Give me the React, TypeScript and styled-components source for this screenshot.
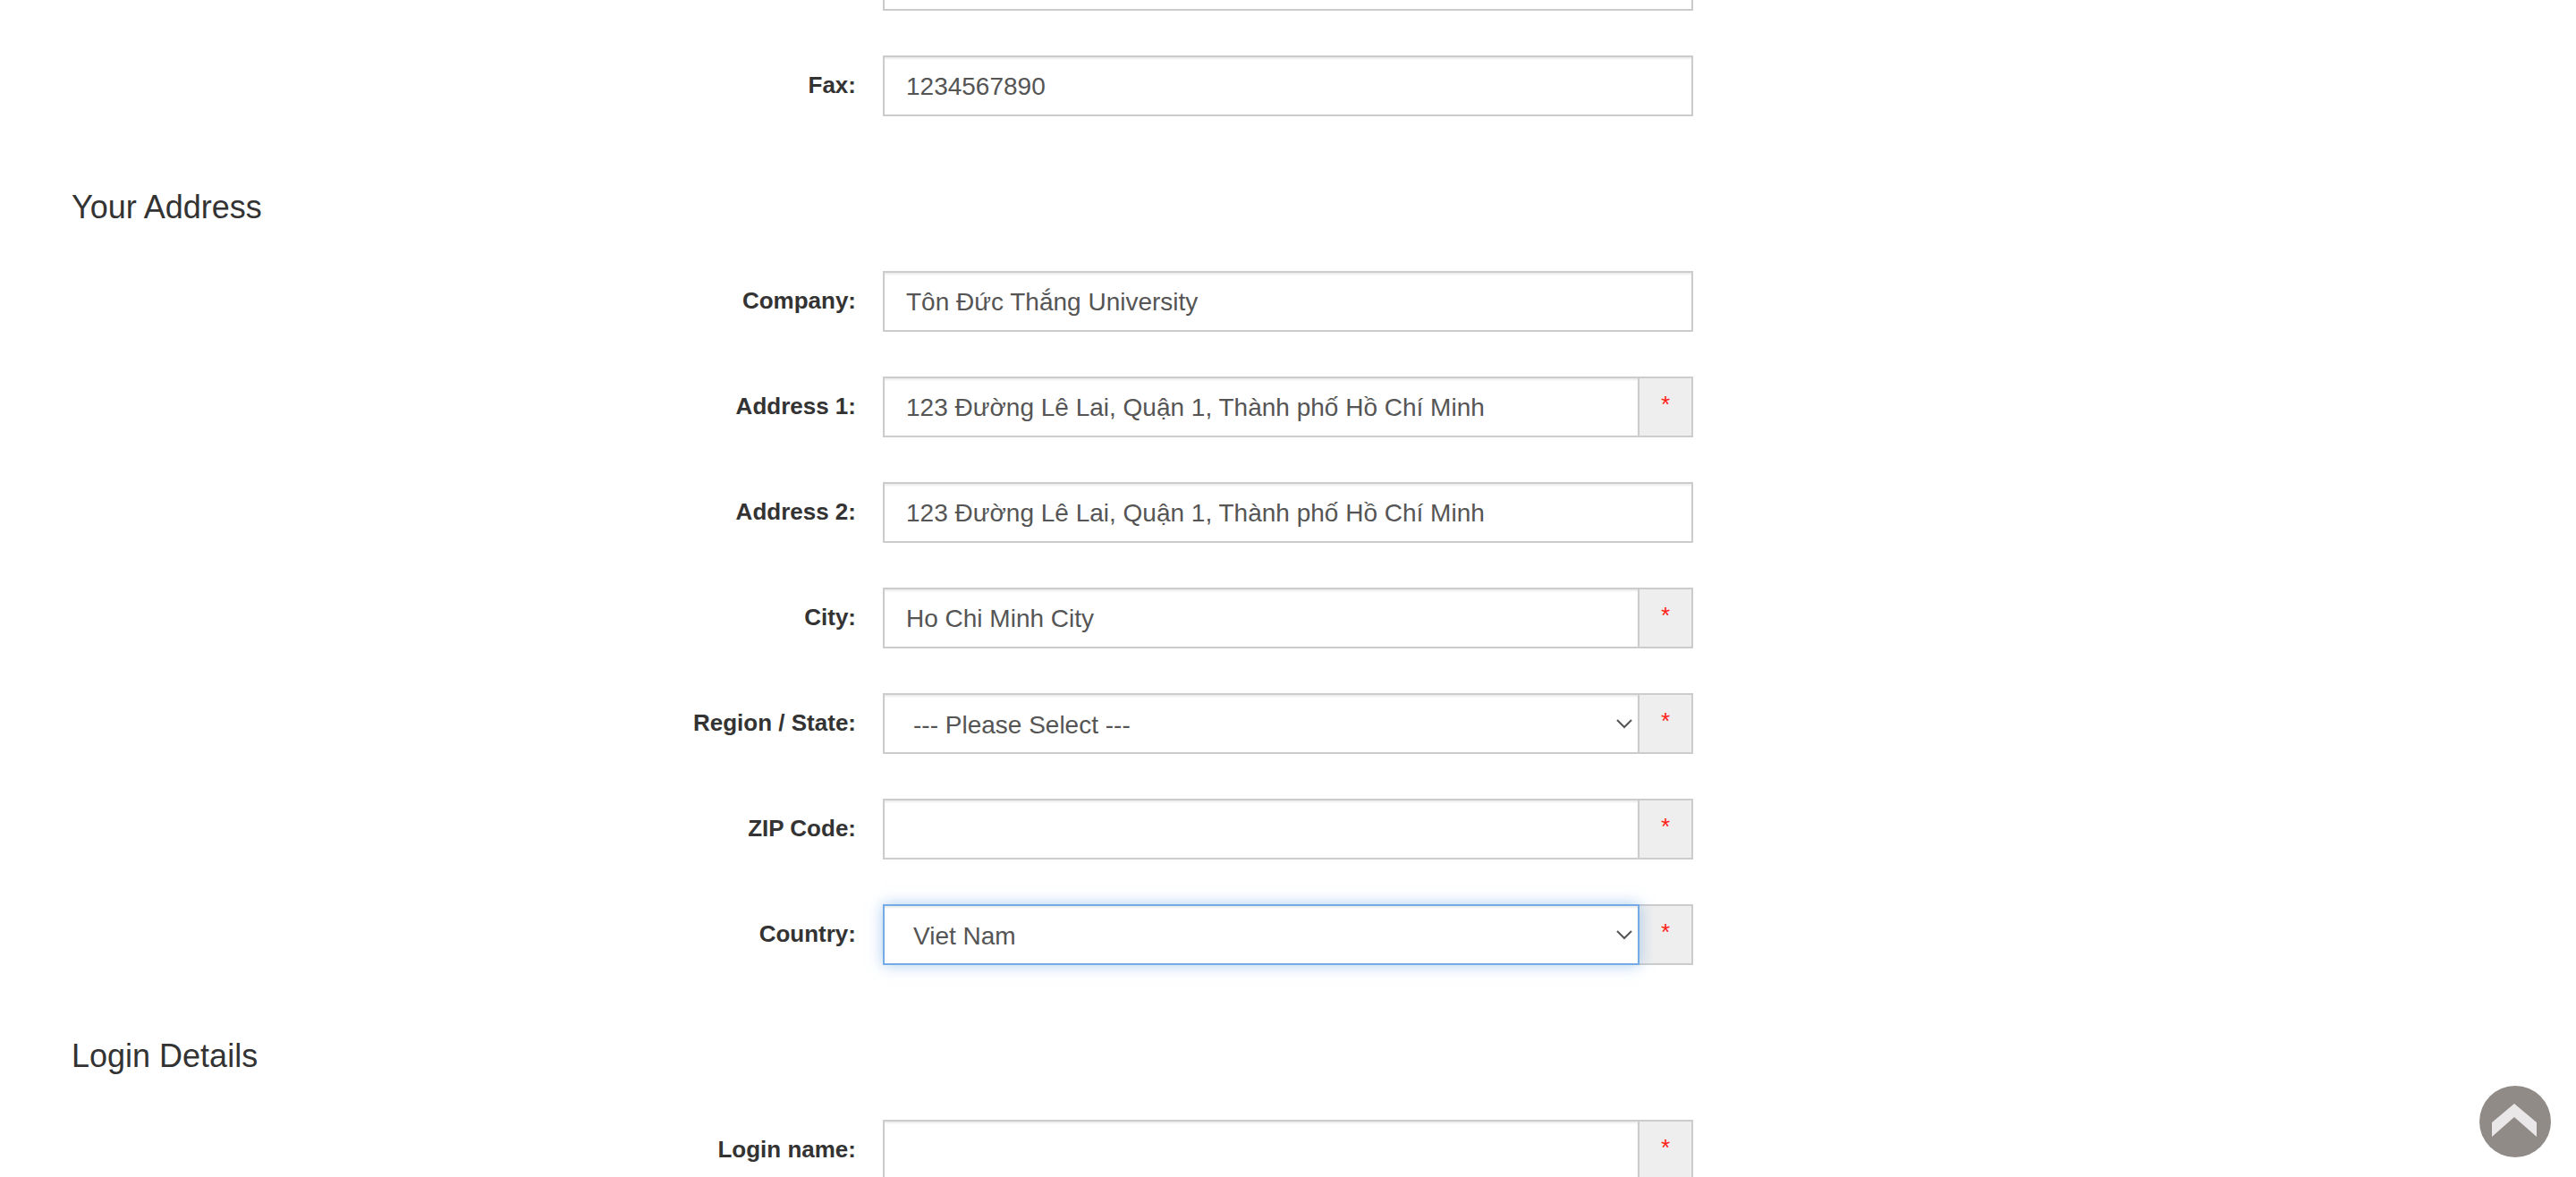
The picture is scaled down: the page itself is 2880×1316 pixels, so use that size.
import React from "react";
import styled, { createGlobalStyle, css } from "styled-components";

const GlobalStyle = createGlobalStyle`
  *, *::before, *::after { box-sizing: border-box; }
  body {
    margin: 0;
    background: #fff;
    color: #333;
    font-family: "Liberation Sans", Arial, Helvetica, sans-serif;
    font-size: 26px;
    line-height: 36px;
  }
`;

const Viewport = styled.main`
  height: 100vh;
  overflow: hidden;
`;

/* The page is scrolled part-way down, so the first field is cut by the window's top edge. */
const Form = styled.form`
  margin-top: -56px;
`;

const Fieldset = styled.fieldset`
  min-width: 0;
  margin: 0;
  padding: 0;
  border: 0;
`;

const Heading = styled.h4`
  margin: 0;
  padding: 32px 80px 51px;
  font-size: 36px;
  line-height: 40px;
  font-weight: 400;
`;

const Row = styled.div`
  display: grid;
  grid-template-columns: repeat(3, minmax(0, 1fr));
  column-gap: 30px;
  padding: 0 51px;
  margin-bottom: 50px;
`;

const Label = styled.label`
  grid-column: 1;
  padding-top: 15px;
  font-weight: 700;
  text-align: right;
`;

const Group = styled.div`
  grid-column: 2;
  display: flex;
`;

const control = css`
  width: 100%;
  min-width: 0;
  height: 68px;
  margin: 0;
  border: 2px solid #ccc;
  border-radius: 0;
  background: #fff;
  color: #555;
  font-family: inherit;
  font-size: 28px;
  line-height: 40px;
  outline: none;
  box-shadow: inset 0 2px 2px rgba(0, 0, 0, 0.075);
`;

const Input = styled.input`
  ${control}
  padding: 13px 24px 11px;
`;

const SelectBox = styled.div`
  position: relative;
  flex: 1;
  display: flex;
`;

const Select = styled.select<{ $active?: boolean }>`
  ${control}
  appearance: none;
  padding: 14px 40px 10px 32px;
  ${({ $active }) =>
    $active &&
    css`
      border-color: #74abe4;
      box-shadow:
        inset 0 2px 2px rgba(0, 0, 0, 0.075),
        0 0 16px rgba(116, 171, 228, 0.6);
    `}
`;

const Arrow = styled.svg`
  position: absolute;
  top: 28px;
  right: 8px;
  width: 18px;
  height: 12px;
  pointer-events: none;
`;

const Addon = styled.span`
  flex: none;
  width: 60px;
  height: 68px;
  padding-top: 11px;
  border: 2px solid #ccc;
  border-left: 0;
  background: #eee;
  color: #ff2014;
  text-align: center;
`;

const TopButton = styled.button`
  position: fixed;
  right: 28px;
  bottom: 22px;
  width: 80px;
  height: 80px;
  padding: 0;
  border: 0;
  border-radius: 50%;
  background: #918b88;
  cursor: pointer;

  svg {
    display: block;
    width: 80px;
    height: 80px;
  }
`;

type FieldProps = {
  id: string;
  label: string;
  value?: string;
  required?: boolean;
};

function TextField({ id, label, value = "", required }: FieldProps) {
  return (
    <Row>
      <Label htmlFor={id}>{label}</Label>
      <Group>
        <Input id={id} type="text" defaultValue={value} />
        {required && <Addon>*</Addon>}
      </Group>
    </Row>
  );
}

function SelectField({ id, label, value, active }: FieldProps & { active?: boolean }) {
  return (
    <Row>
      <Label htmlFor={id}>{label}</Label>
      <Group>
        <SelectBox>
          <Select id={id} $active={active}>
            <option>{value}</option>
          </Select>
          <Arrow viewBox="0 0 18 12" fill="none" stroke="#555" strokeWidth="2" aria-hidden="true">
            <path d="M1 2 L9 10 L17 2" />
          </Arrow>
        </SelectBox>
        <Addon>*</Addon>
      </Group>
    </Row>
  );
}

export default function App() {
  return (
    <Viewport>
      <GlobalStyle />
      <Form>
        <Fieldset>
          <Row>
            <Group>
              <Input type="text" aria-label="Telephone" />
            </Group>
          </Row>
          <TextField id="fax" label="Fax:" value="1234567890" />
        </Fieldset>

        <Heading>Your Address</Heading>
        <Fieldset>
          <TextField id="company" label="Company:" value="Tôn Đức Thắng University" />
          <TextField
            id="address1"
            label="Address 1:"
            value="123 Đường Lê Lai, Quận 1, Thành phố Hồ Chí Minh"
            required
          />
          <TextField
            id="address2"
            label="Address 2:"
            value="123 Đường Lê Lai, Quận 1, Thành phố Hồ Chí Minh"
          />
          <TextField id="city" label="City:" value="Ho Chi Minh City" required />
          <SelectField id="zone" label="Region / State:" value="--- Please Select ---" />
          <TextField id="postcode" label="ZIP Code:" required />
          <SelectField id="country" label="Country:" value="Viet Nam" active />
        </Fieldset>

        <Heading>Login Details</Heading>
        <Fieldset>
          <TextField id="loginname" label="Login name:" required />
        </Fieldset>
      </Form>

      <TopButton type="button" aria-label="Back to top">
        <svg viewBox="0 0 80 80" aria-hidden="true">
          <path d="M39 20 L64 41 V57 L39 35 L14 57 V41 Z" fill="#e9e7e7" />
        </svg>
      </TopButton>
    </Viewport>
  );
}
